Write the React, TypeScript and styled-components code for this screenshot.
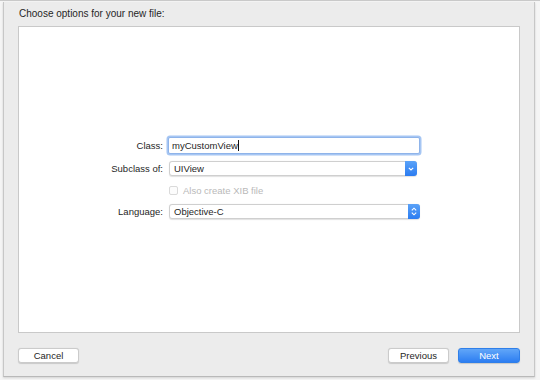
import React from 'react';
import styled, { createGlobalStyle } from 'styled-components';

const GlobalStyle = createGlobalStyle`
    html, body {
        margin: 0;
        padding: 0;
        width: 540px;
        height: 380px;
        overflow: hidden;
        font-family: "Liberation Sans", Arial, sans-serif;
    }
`;

const ChevronDown = () => (
    <svg width="6" height="4" viewBox="0 0 6 4">
        <path d="M0.8 0.8 L3 3 L5.2 0.8" fill="none" stroke="#fff" strokeWidth="1.1" />
    </svg>
);

const ChevronUpDown = () => (
    <svg width="6" height="9" viewBox="0 0 6 9">
        <path d="M0.8 3.4 L3 1.2 L5.2 3.4 M0.8 5.6 L3 7.8 L5.2 5.6" fill="none" stroke="#fff" strokeWidth="1.1" />
    </svg>
);

const App = () => {
    return (
        <Backdrop>
            <GlobalStyle />
            <Sheet>
                <Title>Choose options for your new file:</Title>
                <Panel>
                    <Form>
                        <Label>Class:</Label>
                        <TextField>
                            myCustomView<Caret />
                        </TextField>

                        <Label>Subclass of:</Label>
                        <PopUp $inset={3}>
                            <PopUpText>UIView</PopUpText>
                            <PopUpArrow><ChevronDown /></PopUpArrow>
                        </PopUp>

                        <span />
                        <CheckRow>
                            <CheckBox />
                            <CheckLabel>Also create XIB file</CheckLabel>
                        </CheckRow>

                        <Label>Language:</Label>
                        <PopUp $inset={0}>
                            <PopUpText>Objective-C</PopUpText>
                            <PopUpArrow><ChevronUpDown /></PopUpArrow>
                        </PopUp>
                    </Form>
                </Panel>
                <Footer>
                    <Button>Cancel</Button>
                    <Spacer />
                    <Button>Previous</Button>
                    <Button $primary>Next</Button>
                </Footer>
            </Sheet>
        </Backdrop>
    );
};

export default App;

/*-----------------STYLES-----------------*/
const Backdrop = styled.div`
    box-sizing: border-box;
    width: 540px;
    height: 380px;
    display: flex;
    padding: 1px 5px 3px 3px;
    background: #f5f5f5;
    border-top: 1px solid #c9c9c9;
`;

const Sheet = styled.div`
    flex: 1;
    display: flex;
    flex-direction: column;
    background: #ececec;
    border: 1px solid #c7c7c7;
    border-top: none;
    border-bottom-color: #b9b9b9;
    padding: 0 14px 0 14px;
    box-shadow: 0 1px 2px rgba(0, 0, 0, 0.15);
`;

const Title = styled.div`
    height: 24px;
    line-height: 24px;
    font-size: 10px;
    color: #262626;
    padding-left: 1px;
`;

const Panel = styled.div`
    height: 307px;
    box-sizing: border-box;
    background: #fff;
    border: 1px solid #c9c9c9;
    padding-top: 109px;
`;

const Form = styled.div`
    display: grid;
    grid-template-columns: 144px 252px;
    grid-template-rows: 18px 15px 14px 15px;
    column-gap: 5px;
    row-gap: 7px;
    align-items: center;
`;

const Label = styled.div`
    text-align: right;
    font-size: 9.5px;
    color: #262626;
`;

const TextField = styled.div`
    box-sizing: border-box;
    height: 17px;
    display: flex;
    align-items: center;
    padding-left: 3px;
    background: #fff;
    border: 1px solid #8fb4ea;
    border-radius: 2px;
    box-shadow: 0 0 0 1.5px #a6c6f3;
    font-size: 9.5px;
    color: #1f1f1f;
`;

const Caret = styled.span`
    display: inline-block;
    width: 1px;
    height: 11px;
    background: #111;
`;

const PopUp = styled.div<{ $inset: number }>`
    box-sizing: border-box;
    height: 15px;
    display: flex;
    align-items: stretch;
    background: #fff;
    border: 1px solid #cfcfcf;
    border-radius: 3px;
    box-shadow: 0 0.5px 1px rgba(0, 0, 0, 0.12);
    margin: 0 ${p => p.$inset}px 0 1px;
`;

const PopUpText = styled.div`
    flex: 1;
    display: flex;
    align-items: center;
    padding-left: 4px;
    font-size: 9.5px;
    color: #1f1f1f;
`;

const PopUpArrow = styled.div`
    width: 12px;
    margin: -1px -1px -1px 0;
    display: flex;
    align-items: center;
    justify-content: center;
    border-radius: 0 3px 3px 0;
    background: linear-gradient(#5aa2f8, #2b7cf1);
`;

const CheckRow = styled.div`
    display: flex;
    align-items: center;
    gap: 5px;
    padding-left: 1px;
`;

const CheckBox = styled.div`
    box-sizing: border-box;
    width: 9px;
    height: 9px;
    border: 1px solid #dadada;
    border-radius: 2px;
    background: #fcfcfc;
`;

const CheckLabel = styled.span`
    font-size: 9.5px;
    color: #b9b9b9;
`;

const Footer = styled.div`
    display: flex;
    align-items: flex-start;
    gap: 9px;
    padding-top: 15px;
`;

const Spacer = styled.div`
    flex: 1;
`;

const Button = styled.div<{ $primary?: boolean }>`
    box-sizing: border-box;
    width: ${p => (p.$primary ? 62 : 61)}px;
    height: 15px;
    display: flex;
    align-items: center;
    justify-content: center;
    border-radius: 3px;
    font-size: 9.5px;
    color: ${p => (p.$primary ? '#fff' : '#262626')};
    background: ${p => (p.$primary ? 'linear-gradient(#61a6f8, #2d7ef2)' : '#fff')};
    border: 1px solid ${p => (p.$primary ? '#2f7fe9' : '#cbcbcb')};
    box-shadow: 0 0.5px 1px rgba(0, 0, 0, 0.15);
`;
